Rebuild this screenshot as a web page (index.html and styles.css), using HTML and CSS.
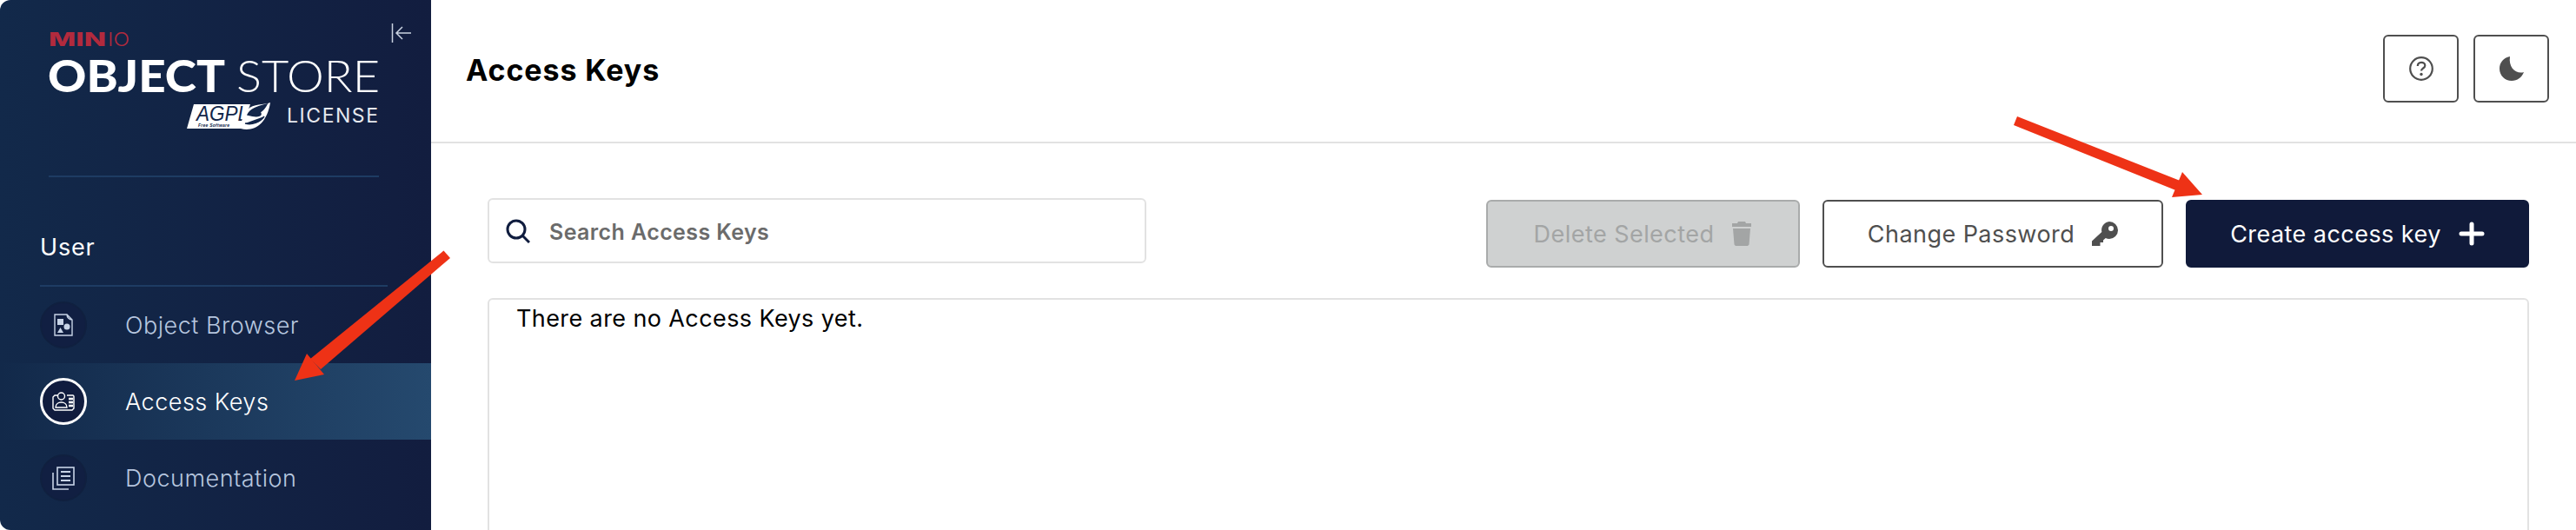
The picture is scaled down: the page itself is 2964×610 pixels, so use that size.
FILE: index.html
```html
<!DOCTYPE html>
<html lang="en">
<head>
    <meta charset="UTF-8">
    <title>Access Keys</title>
    <link rel="stylesheet" href="styles.css">
</head>
<body>
    <div class="app">
        <aside class="sidebar">
            <div class="brand">
                <svg class="logo" width="380" height="126" viewBox="0 0 380 126">
                    <text class="logo-minio" x="0" y="27" textLength="66" lengthAdjust="spacingAndGlyphs">MIN</text>
                    <text class="logo-io" x="68" y="27" textLength="25" lengthAdjust="spacingAndGlyphs">IO</text>
                    <text class="logo-object" x="-1" y="80" textLength="204" lengthAdjust="spacingAndGlyphs">OBJECT</text>
                    <text class="logo-store" x="216" y="80" textLength="165" lengthAdjust="spacingAndGlyphs">STORE</text>
                    <polygon points="167,94 232,94 222,122 159,122" fill="#fff"/>
                    <text class="logo-agpl" x="170" y="113" textLength="60" lengthAdjust="spacingAndGlyphs">AGPL</text>
                    <text class="logo-free" x="172" y="120" textLength="36">Free Software</text>
                    <path d="M221 122c14 4 30-4 34-30-7 3-20 1-26 8-4 5-9 15-8 22z" fill="#fff"/>
                    <path d="M229 106c3-6 10-9 22-12-2 4-4 7-8 9 3 3 0 7-14 3zM226 116c8 2 17-1 22-8" fill="#12264a" stroke="#12264a" stroke-width="1.5"/>
                    <text class="logo-license" x="274" y="115" textLength="105">LICENSE</text>
                </svg>
                <svg class="collapse" width="24" height="24" viewBox="0 0 24 24" fill="none" stroke="#c9d2e0" stroke-width="1.5">
                    <path d="M1.5 1v22M23 12H6.500M13 5l-7 7 7 7"/>
                </svg>
            </div>
            <div class="section-title">User</div>
            <nav class="menu">
                <a class="menu-item">
                    <span class="menu-icon">
                        <svg width="22" height="26" viewBox="0 0 22 26" fill="none" stroke="currentColor" stroke-width="1.400">
                            <path d="M1 1h14l6 6v18H1zM15 1a6 6 0 0 0 6 6"/>
                            <rect x="4" y="6" width="7" height="7" fill="currentColor" stroke="none"/>
                            <circle cx="15" cy="15" r="3.500" fill="currentColor" stroke="none"/>
                            <polygon points="4,22 11,22 7.500,16" fill="currentColor" stroke="none"/>
                        </svg>
                    </span>
                    Object Browser
                </a>
                <a class="menu-item active">
                    <span class="menu-icon">
                        <svg width="26" height="22" viewBox="0 0 26 22" fill="none" stroke="currentColor" stroke-width="1.400">
                            <path d="M7 4H3L1 6v13l2 2h20l2-2V5l-1-1h-7"/>
                            <circle cx="10.500" cy="5" r="4"/>
                            <path d="M4 18c0-8 13-8 13 0z"/>
                            <path d="M19 8h5M19 12h5M19 16h5" stroke-width="2.400"/>
                        </svg>
                    </span>
                    Access Keys
                </a>
                <a class="menu-item">
                    <span class="menu-icon">
                        <svg width="26" height="27" viewBox="0 0 26 27" fill="none" stroke="currentColor" stroke-width="1.600">
                            <rect x="6" y="1" width="19" height="20"/>
                            <path d="M10 6h11M10 11h11M10 16h11" stroke-width="2.200"/>
                            <path d="M1 7v19h18"/>
                        </svg>
                    </span>
                    Documentation
                </a>
            </nav>
        </aside>

        <main class="main">
            <header class="page-header">
                <h1>Access Keys</h1>
                <div class="header-actions">
                    <button class="icon-button">
                        <svg width="28" height="28" viewBox="0 0 28 28" fill="none" stroke="#4f4f4f" stroke-width="2.200">
                            <circle cx="14" cy="14" r="12.800"/>
                            <path d="M9.800 11c0-5.500 8.500-5.500 8.500-.5 0 3-4.300 3-4.300 6"/>
                            <circle cx="14" cy="20.500" r="1.700" fill="#4f4f4f" stroke="none"/>
                        </svg>
                    </button>
                    <button class="icon-button">
                        <svg width="28" height="28" viewBox="0 0 28 28">
                            <path d="M12 0C4.500 1.500 0 7 0 14c0 8 6.300 14 14 14 6.500 0 11.500-3.800 14-10-8.500 2.500-18-4.500-16-18z" fill="#4f4f4f"/>
                        </svg>
                    </button>
                </div>
            </header>

            <section class="content">
                <div class="toolbar">
                    <label class="search">
                        <svg width="28" height="28" viewBox="0 0 28 28" fill="none" stroke="#0f1c3e" stroke-width="3">
                            <circle cx="12" cy="12" r="10"/>
                            <path d="M19 19l8 8"/>
                        </svg>
                        <span class="search-text">Search Access Keys</span>
                    </label>
                    <div class="toolbar-actions">
                        <button class="btn btn-disabled">
                            Delete Selected
                            <svg width="24" height="28" viewBox="0 0 24 28" fill="#a3a5a5">
                                <path d="M8 0h8l1 2h6v4H1V2h6zM2 8h20l-1.500 18.500L19 28H5l-1.500-1.500z"/>
                            </svg>
                        </button>
                        <button class="btn btn-outline">
                            Change Password
                            <svg width="30" height="28" viewBox="0 0 30 28" fill="#4f4f4f">
                                <path fill-rule="evenodd" d="M20 0a10 10 0 0 1 0 20c-1.500 0-3-.4-4.200-1L13 21.500V24H9.500v4H0v-5.500L11.300 12A10 10 0 0 1 20 0zm2 5a3 3 0 1 0 0 6 3 3 0 0 0 0-6z"/>
                            </svg>
                        </button>
                        <button class="btn btn-primary">
                            Create access key
                            <svg width="30" height="28" viewBox="0 0 30 28" fill="none" stroke="#fff" stroke-width="5" stroke-linecap="round">
                                <path d="M15 3v22M3 14h24"/>
                            </svg>
                        </button>
                    </div>
                </div>
                <div class="table-box">There are no Access Keys yet.</div>
            </section>
        </main>
    </div>

    <svg class="arrows" width="2964" height="610" viewBox="0 0 2964 610">
        <g fill="#ee3216">
            <path d="M510.500 288.500L518 297 369 425 357 413z"/>
            <polygon points="339,438 353,407 373,431"/>
            <path d="M2321 134L2317 144 2506 220 2511 209z"/>
            <polygon points="2534,224 2511,198 2499,227"/>
        </g>
    </svg>
</body>
</html>
```
FILE: styles.css
```css
* {
    box-sizing: border-box;
}

body {
    margin: 0;
    background: #fff;
    font-family: 'Inter', 'Liberation Sans', sans-serif;
}

.app {
    display: flex;
    height: 610px;
    overflow: hidden;
}

/* sidebar */
.sidebar {
    flex: 0 0 496px;
    background: linear-gradient(90deg, #12294a 0%, #121d3f 100%);
    border-radius: 12px 0 0 12px;
    color: #fff;
}

.brand {
    display: flex;
    align-items: flex-start;
    gap: 14px;
    height: 202px;
    margin: 0 0 0 56px;
    padding-top: 26px;
    position: relative;
    width: 420px;
}

.brand::after {
    content: "";
    position: absolute;
    left: 0;
    bottom: -2px;
    width: 380px;
    height: 2px;
    background: #1e3c63;
}

.logo {
    flex: none;
}

.collapse {
    flex: none;
}

.logo-minio {
    font: 800 21px 'Inter', sans-serif;
    fill: #b22a3d;
}

.logo-io {
    font: 300 21px 'Inter', sans-serif;
    fill: #b22a3d;
}

.logo-object {
    font: 900 52px 'Lato', sans-serif;
    fill: #fff;
}

.logo-store {
    font: 300 52px 'Lato', sans-serif;
    fill: #fff;
}

.logo-agpl {
    font: italic 400 24px 'Liberation Sans', sans-serif;
    fill: #12264a;
}

.logo-free {
    font: italic 700 5px 'Liberation Sans', sans-serif;
    fill: #12264a;
}

.logo-license {
    font: 400 23px 'Inter', sans-serif;
    fill: #e6e9ef;
}

.section-title {
    margin: 67px 50px 0 46px;
    padding-bottom: 27px;
    border-bottom: 2px solid #1e3c63;
    font-size: 27px;
    line-height: 32px;
    letter-spacing: 0.8px;
}

.menu {
    display: flex;
    flex-direction: column;
}

.menu-item {
    display: flex;
    align-items: center;
    gap: 44px;
    height: 88px;
    padding-left: 46px;
    font-size: 27px;
    font-weight: 300;
    letter-spacing: 0.5px;
    color: #b6c6df;
}

.menu-item.active {
    color: #fff;
    background: linear-gradient(90deg, #12294a 0%, #25496e 100%);
}

.menu-icon {
    display: flex;
    align-items: center;
    justify-content: center;
    width: 54px;
    height: 54px;
    border-radius: 50%;
    background: #111f42;
    border: 2px solid #10203f;
    color: #c7d3e6;
}

.active .menu-icon {
    border: 3px solid #fff;
    background: #101c3e;
    color: #fff;
}

/* main area */
.main {
    flex: 1;
    min-width: 0;
}

.page-header {
    display: flex;
    align-items: center;
    justify-content: space-between;
    height: 165px;
    padding: 0 31px 0 40px;
    border-bottom: 2px solid #e2e2e2;
}

h1 {
    margin: 0 0 2px;
    font-size: 34px;
    font-weight: 700;
    letter-spacing: 0.9px;
    color: #000;
}

.header-actions {
    display: flex;
    gap: 17px;
    margin-bottom: 6px;
}

.icon-button {
    display: flex;
    align-items: center;
    justify-content: center;
    width: 87px;
    height: 78px;
    padding: 0;
    background: #fff;
    border: 2px solid #4f4f4f;
    border-radius: 6px;
}

.content {
    padding: 63px 54px 0 65px;
}

.toolbar {
    display: flex;
    justify-content: space-between;
    align-items: flex-start;
    margin-bottom: 35px;
}

.search {
    display: flex;
    align-items: center;
    gap: 22px;
    width: 758px;
    height: 75px;
    padding-left: 19px;
    border: 2px solid #e2e2e2;
    border-radius: 6px;
}

.search-text {
    padding-top: 2px;
    font-size: 25px;
    font-weight: 600;
    letter-spacing: 0.4px;
    color: #6b6b6b;
}

.toolbar-actions {
    display: flex;
    gap: 26px;
    margin-top: 2px;
}

.btn {
    display: flex;
    align-items: center;
    justify-content: center;
    gap: 20px;
    height: 78px;
    padding: 0;
    border-radius: 6px;
    font-family: inherit;
    font-size: 27px;
    letter-spacing: 0.45px;
}

.btn-disabled {
    width: 361px;
    background: #cfd1d1;
    border: 2px solid #a9abab;
    color: #a3a5a5;
}

.btn-outline {
    width: 392px;
    background: #fff;
    border: 2px solid #4f4f4f;
    color: #4f4f4f;
}

.btn-primary {
    width: 395px;
    background: #101a3a;
    border: 2px solid #101a3a;
    color: #fff;
}

.table-box {
    height: 400px;
    padding: 3px 31px;
    border: 2px solid #e2e2e2;
    border-radius: 6px;
    font-size: 27px;
    line-height: 38px;
    letter-spacing: 0.4px;
    color: #000;
}

/* annotation arrows over the page */
.arrows {
    position: absolute;
    top: 0;
    left: 0;
}
```
